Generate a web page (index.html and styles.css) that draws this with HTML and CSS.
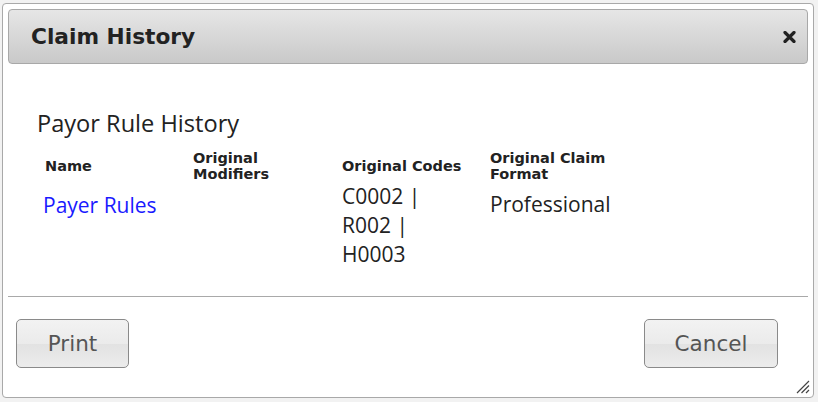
FILE: index.html
```html
<!DOCTYPE html>
<html>
<head>
<meta charset="utf-8">
<title>Claim History</title>
<link rel="stylesheet" href="styles.css">
</head>
<body>
<div class="dialog">
  <div class="titlebar">
    <span class="title">Claim History</span>
    <span class="close" aria-label="close">
      <svg width="13" height="12" viewBox="0 0 13 12"><path d="M2 1.5 L11 10.5 M11 1.5 L2 10.5" stroke="#222" stroke-width="3.2" stroke-linecap="round"/></svg>
    </span>
  </div>
  <div class="content">
    <h2 class="section">Payor Rule History</h2>
    <div class="grid">
      <div class="th">Name</div>
      <div class="th">Original Modifiers</div>
      <div class="th">Original Codes</div>
      <div class="th">Original Claim Format</div>
      <div class="td td-name"><a href="#" class="link">Payer Rules</a></div>
      <div class="td"></div>
      <div class="td td-codes">C0002 |<br>R002 |<br>H0003</div>
      <div class="td td-format">Professional</div>
    </div>
  </div>
  <div class="buttons">
    <button class="btn">Print</button>
    <button class="btn btn-cancel">Cancel</button>
  </div>
  <span class="grip">
    <svg width="14" height="14" viewBox="0 0 14 14"><path d="M13 1 L1 13 M13 5.5 L5.5 13 M13 10 L10 13" stroke="#444" stroke-width="1.2"/></svg>
  </span>
</div>
</body>
</html>
```
FILE: styles.css
```css
* { box-sizing: border-box; }
html, body { margin: 0; padding: 0; }
body {
  width: 818px;
  height: 402px;
  background: #f2f2f2;
  overflow: hidden;
  font-family: "Open Sans", "DejaVu Sans", sans-serif;
}
.dialog {
  position: relative;
  margin: 3px 0 0 2px;
  width: 812px;
  height: 395px;
  background: #fff;
  border: 1px solid #a9a9a9;
  border-radius: 4px;
  padding: 5px 5px 0 5px;
  display: flex;
  flex-direction: column;
}
.titlebar {
  height: 55px;
  border: 1px solid #a8a8a8;
  border-radius: 4px;
  background: linear-gradient(#e6e6e6, #c9c9c9);
  display: flex;
  align-items: center;
  justify-content: space-between;
  padding: 0 11px 0 22px;
}
.title {
  font-family: "DejaVu Sans", Verdana, sans-serif;
  font-weight: bold;
  font-size: 21.7px;
  color: #222;
}
.close { display: flex; }
.content {
  padding: 44px 0 0 29px;
  height: 233px;
  border-bottom: 1px solid #a9a9a9;
}
.section {
  margin: 0;
  font-weight: normal;
  font-size: 23.6px;
  line-height: 30px;
  color: #222;
}
.grid {
  display: grid;
  grid-template-columns: 148px 149px 148px 150px;
  padding-left: 8px;
  margin-top: 12px;
  align-items: center;
}
.th {
  font-family: "DejaVu Sans", Verdana, sans-serif;
  font-weight: bold;
  font-size: 14.5px;
  line-height: 16px;
  color: #222;
  padding-right: 14px;
}
.td {
  align-self: start;
  font-size: 21px;
  color: #222;
}
.td-name { margin-left: -2px; padding-top: 9px; }
.link { color: #1a1aff; text-decoration: none; }
.td-codes { line-height: 29px; padding-top: 0; }
.td-format { padding-top: 8px; }
.buttons {
  display: flex;
  justify-content: space-between;
  padding: 22px 30px 0 8px;
}
.btn {
  height: 49px;
  border: 1px solid #8a8a8a;
  border-radius: 5px;
  background: linear-gradient(#f2f2f2 0%, #ebebeb 50%, #e2e2e2 51%, #ececec 100%);
  font-family: "DejaVu Sans", Verdana, sans-serif;
  font-size: 21.5px;
  color: #555;
  padding: 0;
  width: 113px;
}
.btn-cancel { width: 134px; }
.grip {
  position: absolute;
  right: 3px;
  bottom: 3px;
  display: flex;
}
```
